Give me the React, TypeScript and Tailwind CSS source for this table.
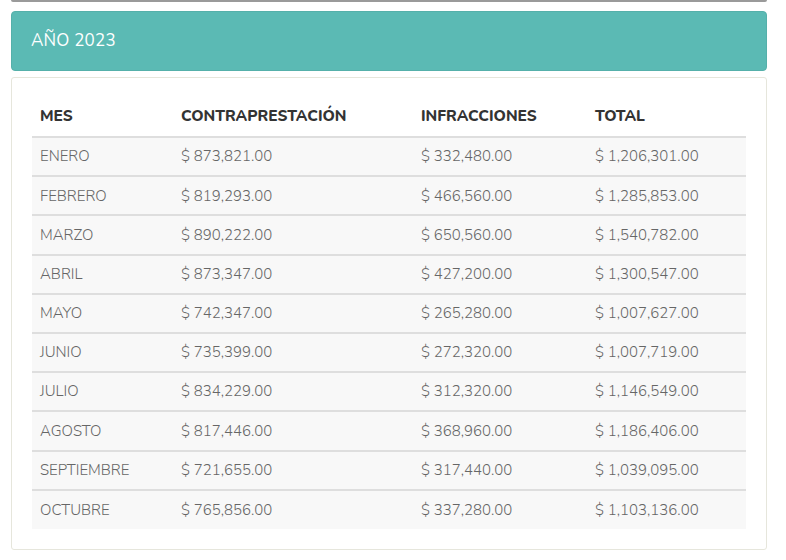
import React from "react";

const rows: [string, string, string, string][] = [
  ["ENERO", "$ 873,821.00", "$ 332,480.00", "$ 1,206,301.00"],
  ["FEBRERO", "$ 819,293.00", "$ 466,560.00", "$ 1,285,853.00"],
  ["MARZO", "$ 890,222.00", "$ 650,560.00", "$ 1,540,782.00"],
  ["ABRIL", "$ 873,347.00", "$ 427,200.00", "$ 1,300,547.00"],
  ["MAYO", "$ 742,347.00", "$ 265,280.00", "$ 1,007,627.00"],
  ["JUNIO", "$ 735,399.00", "$ 272,320.00", "$ 1,007,719.00"],
  ["JULIO", "$ 834,229.00", "$ 312,320.00", "$ 1,146,549.00"],
  ["AGOSTO", "$ 817,446.00", "$ 368,960.00", "$ 1,186,406.00"],
  ["SEPTIEMBRE", "$ 721,655.00", "$ 317,440.00", "$ 1,039,095.00"],
  ["OCTUBRE", "$ 765,856.00", "$ 337,280.00", "$ 1,103,136.00"],
];

export default function App() {
  return (
    <div
      className="w-[786px] h-[560px] bg-white overflow-hidden"
      style={{ fontFamily: "Nunito, Lato, 'Open Sans', sans-serif" }}
    >
      <div className="ml-[11px] w-[756px] h-[2px] bg-[#9a9a9a] rounded-b-[2px]" />
      <div className="ml-[11px] w-[756px] mt-[9px] h-[60px] rounded-[4px] bg-[#5bbab4] border border-[#55b0aa] flex items-center pl-[19px]">
        <span className="text-white text-[17px] tracking-[0.2px]">AÑO 2023</span>
      </div>
      <div className="ml-[11px] w-[756px] mt-[6px] h-[473px] rounded-[3px] border border-[#e6e6dc] px-[20px] pt-[17px]">
        <table className="w-[714px] border-collapse table-fixed">
          <colgroup>
            <col className="w-[141px]" />
            <col className="w-[240px]" />
            <col className="w-[174px]" />
            <col className="w-[159px]" />
          </colgroup>
          <thead>
            <tr className="h-[42px] border-b-2 border-[#dedede]">
              {["MES", "CONTRAPRESTACIÓN", "INFRACCIONES", "TOTAL"].map((h) => (
                <th
                  key={h}
                  className="text-left pl-[8px] text-[15.5px] font-extrabold text-[#333] align-middle"
                >
                  {h}
                </th>
              ))}
            </tr>
          </thead>
          <tbody>
            {rows.map((r, i) => (
              <tr
                key={r[0]}
                className={
                  "h-[39.2px] bg-[#f8f8f8] " +
                  (i < rows.length - 1 ? "border-b-2 border-[#dedede]" : "")
                }
              >
                {r.map((c, j) => (
                  <td
                    key={j}
                    className="pl-[8px] text-[15px] font-light text-[#666] align-middle whitespace-nowrap"
                  >
                    {c}
                  </td>
                ))}
              </tr>
            ))}
          </tbody>
        </table>
      </div>
    </div>
  );
}
